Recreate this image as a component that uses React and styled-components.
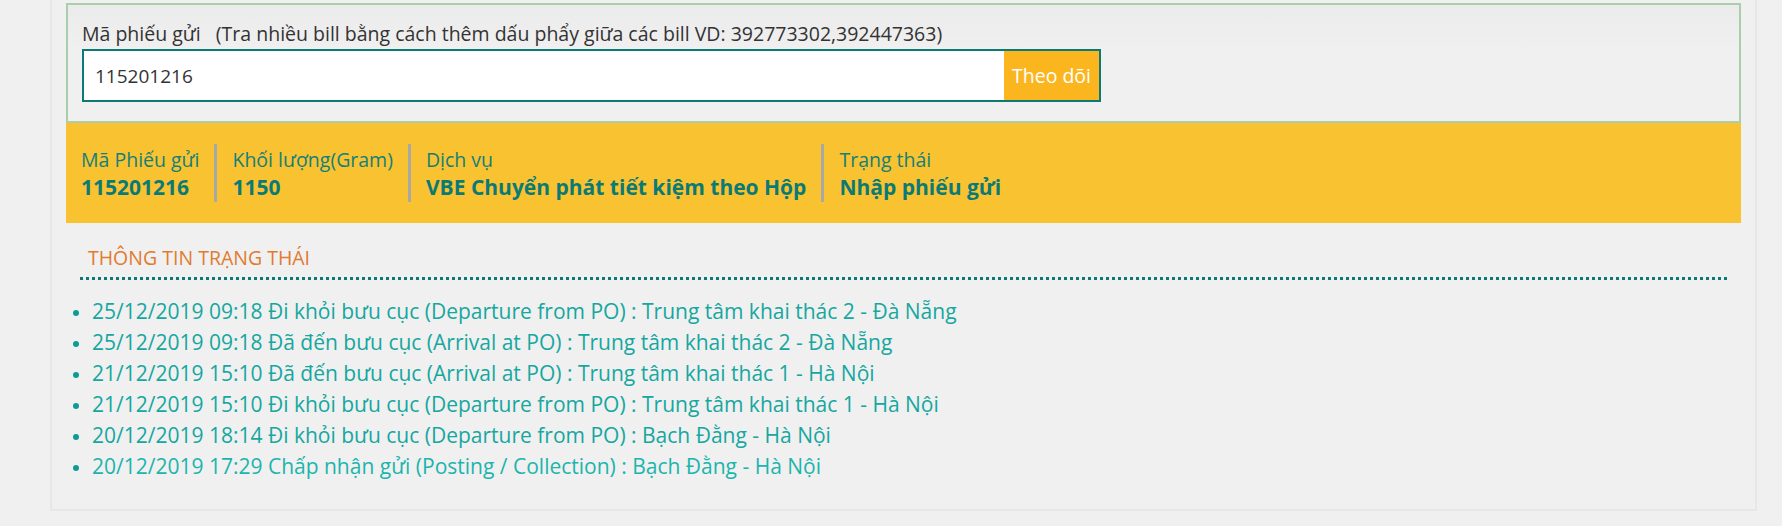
import React from 'react'
import styled, { createGlobalStyle } from 'styled-components'

const GlobalStyle = createGlobalStyle`
  html, body {
    margin: 0;
    padding: 0;
    background: #f0f0f0;
    font-family: "Open Sans", "Noto Sans", sans-serif;
  }
`

const bill = {
  code: '115201216',
  weight: '1150',
  service: 'VBE Chuyển phát tiết kiệm theo Hộp',
  status: 'Nhập phiếu gửi'
}

const events = [
  '25/12/2019 09:18 Đi khỏi bưu cục (Departure from PO) : Trung tâm khai thác 2 - Đà Nẵng',
  '25/12/2019 09:18 Đã đến bưu cục (Arrival at PO) : Trung tâm khai thác 2 - Đà Nẵng',
  '21/12/2019 15:10 Đã đến bưu cục (Arrival at PO) : Trung tâm khai thác 1 - Hà Nội',
  '21/12/2019 15:10 Đi khỏi bưu cục (Departure from PO) : Trung tâm khai thác 1 - Hà Nội',
  '20/12/2019 18:14 Đi khỏi bưu cục (Departure from PO) : Bạch Đằng - Hà Nội',
  '20/12/2019 17:29 Chấp nhận gửi (Posting / Collection) : Bạch Đằng - Hà Nội'
]

// #region styled components
const Page = styled.div`
  padding: 0 25px 15px 50px;
`
const Panel = styled.div`
  width: 1707px;
  box-sizing: border-box;
  padding: 3px 14px 27px 14px;
  border: 2px solid #e7e7e7;
  border-top: none;
  background: #f0f0f0;
`
const SearchBox = styled.div`
  border: 2px solid #a9cea9;
  background: linear-gradient(#ebebeb, #f0f0f0 40%);
  padding: 16px 14px 19px 14px;
`
const Label = styled.div`
  font-size: 19.5px;
  color: #333;
  line-height: 26px;
  margin-bottom: 2px;
  white-space: pre;
`
const SearchRow = styled.div`
  display: flex;
  width: 1019px;
  height: 53px;
  border: 2px solid #0b7a75;
  box-sizing: border-box;
`
const Input = styled.input`
  flex: 1;
  border: none;
  outline: none;
  background: #fff;
  font-family: inherit;
  font-size: 19px;
  color: #333;
  padding: 0 0 0 11px;
`
const Button = styled.button`
  width: 95px;
  border: none;
  background: #fbb61f;
  color: #fff;
  font-family: inherit;
  font-size: 19.5px;
  padding: 0;
`
const InfoBar = styled.div`
  display: flex;
  align-items: center;
  background: #f9c231;
  height: 100px;
  padding: 0 0 0 15px;
`
const InfoCol = styled.div`
  padding: 0 15px 0 0;
  margin-right: 15px;
  border-right: ${({ last }) => (last ? 'none' : '3px solid #a8a8a8')};
  height: 58px;
  display: flex;
  flex-direction: column;
  justify-content: center;
`
const InfoLabel = styled.div`
  font-size: 19.5px;
  color: #13807a;
  line-height: 27px;
`
const InfoValue = styled.div`
  font-size: 21px;
  font-weight: 700;
  color: #0b7a75;
  line-height: 28px;
`
const Heading = styled.div`
  margin: 21px 0 0 14px;
  padding: 0 0 5px 8px;
  border-bottom: 3px dotted #0b7a75;
  width: 1639px;
  font-size: 19.5px;
  color: #e07b2f;
  line-height: 28px;
`
const Timeline = styled.ul`
  margin: 16px 0 0 0;
  padding: 0 0 0 26px;
  list-style: disc;
`
const Item = styled.li`
  font-size: 21px;
  line-height: 31px;
  color: ${({ last }) => (last ? '#1ab5ad' : '#15a7a0')};
  &::marker { color: #0e9b93; font-size: 18px; }
`
//#endregion

export default function App() {
  return (
    <Page>
      <GlobalStyle />
      <Panel>
        <SearchBox>
          <Label>Mã phiếu gửi   (Tra nhiều bill bằng cách thêm dấu phẩy giữa các bill VD: 392773302,392447363)</Label>
          <SearchRow>
            <Input defaultValue={bill.code} />
            <Button>Theo dõi</Button>
          </SearchRow>
        </SearchBox>
        <InfoBar>
          <InfoCol>
            <InfoLabel>Mã Phiếu gửi</InfoLabel>
            <InfoValue>{bill.code}</InfoValue>
          </InfoCol>
          <InfoCol>
            <InfoLabel>Khối lượng(Gram)</InfoLabel>
            <InfoValue>{bill.weight}</InfoValue>
          </InfoCol>
          <InfoCol>
            <InfoLabel>Dịch vụ</InfoLabel>
            <InfoValue>{bill.service}</InfoValue>
          </InfoCol>
          <InfoCol last>
            <InfoLabel>Trạng thái</InfoLabel>
            <InfoValue>{bill.status}</InfoValue>
          </InfoCol>
        </InfoBar>
        <Heading>THÔNG TIN TRẠNG THÁI</Heading>
        <Timeline>
          {events.map((e, i) => (
            <Item key={i} last={i === events.length - 1}>{e}</Item>
          ))}
        </Timeline>
      </Panel>
    </Page>
  )
}
